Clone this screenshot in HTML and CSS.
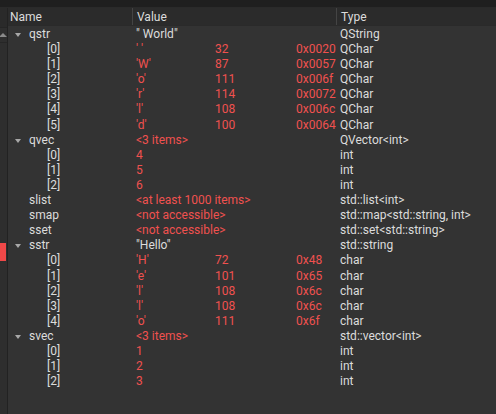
FILE: index.html
```html
<!DOCTYPE html>
<html lang="en">
<head>
  <meta charset="UTF-8">
  <title>Locals</title>
  <link rel="stylesheet" href="styles.css">
</head>
<body>
  <div class="topbar"></div>
  <div class="panel">
    <div class="gutter">
      <div class="gutter-head"></div>
      <div class="scroll-up"><span class="up-arrow"></span></div>
      <div class="breakpoint"></div>
    </div>
    <div class="view">
      <div class="header">
        <div class="col-name">Name</div>
        <div class="col-value">Value</div>
        <div class="col-type">Type</div>
      </div>

      <div class="row"><div class="col-name top"><span class="twisty"></span>qstr</div><div class="col-value plain">" World"</div><div class="col-type">QString</div></div>
      <div class="row"><div class="col-name child">[0]</div><div class="col-value"><span class="ch">' '</span><span class="dec">32</span><span class="hex">0x0020</span></div><div class="col-type">QChar</div></div>
      <div class="row"><div class="col-name child">[1]</div><div class="col-value"><span class="ch">'W'</span><span class="dec">87</span><span class="hex">0x0057</span></div><div class="col-type">QChar</div></div>
      <div class="row"><div class="col-name child">[2]</div><div class="col-value"><span class="ch">'o'</span><span class="dec">111</span><span class="hex">0x006f</span></div><div class="col-type">QChar</div></div>
      <div class="row"><div class="col-name child">[3]</div><div class="col-value"><span class="ch">'r'</span><span class="dec">114</span><span class="hex">0x0072</span></div><div class="col-type">QChar</div></div>
      <div class="row"><div class="col-name child">[4]</div><div class="col-value"><span class="ch">'l'</span><span class="dec">108</span><span class="hex">0x006c</span></div><div class="col-type">QChar</div></div>
      <div class="row"><div class="col-name child">[5]</div><div class="col-value"><span class="ch">'d'</span><span class="dec">100</span><span class="hex">0x0064</span></div><div class="col-type">QChar</div></div>

      <div class="row"><div class="col-name top"><span class="twisty"></span>qvec</div><div class="col-value">&lt;3 items&gt;</div><div class="col-type">QVector&lt;int&gt;</div></div>
      <div class="row"><div class="col-name child">[0]</div><div class="col-value">4</div><div class="col-type">int</div></div>
      <div class="row"><div class="col-name child">[1]</div><div class="col-value">5</div><div class="col-type">int</div></div>
      <div class="row"><div class="col-name child">[2]</div><div class="col-value">6</div><div class="col-type">int</div></div>

      <div class="row"><div class="col-name top">slist</div><div class="col-value">&lt;at least 1000 items&gt;</div><div class="col-type">std::list&lt;int&gt;</div></div>
      <div class="row"><div class="col-name top">smap</div><div class="col-value">&lt;not accessible&gt;</div><div class="col-type">std::map&lt;std::string, int&gt;</div></div>
      <div class="row"><div class="col-name top">sset</div><div class="col-value">&lt;not accessible&gt;</div><div class="col-type">std::set&lt;std::string&gt;</div></div>

      <div class="row"><div class="col-name top"><span class="twisty"></span>sstr</div><div class="col-value plain">"Hello"</div><div class="col-type">std::string</div></div>
      <div class="row"><div class="col-name child">[0]</div><div class="col-value"><span class="ch">'H'</span><span class="dec">72</span><span class="hex">0x48</span></div><div class="col-type">char</div></div>
      <div class="row"><div class="col-name child">[1]</div><div class="col-value"><span class="ch">'e'</span><span class="dec">101</span><span class="hex">0x65</span></div><div class="col-type">char</div></div>
      <div class="row"><div class="col-name child">[2]</div><div class="col-value"><span class="ch">'l'</span><span class="dec">108</span><span class="hex">0x6c</span></div><div class="col-type">char</div></div>
      <div class="row"><div class="col-name child">[3]</div><div class="col-value"><span class="ch">'l'</span><span class="dec">108</span><span class="hex">0x6c</span></div><div class="col-type">char</div></div>
      <div class="row"><div class="col-name child">[4]</div><div class="col-value"><span class="ch">'o'</span><span class="dec">111</span><span class="hex">0x6f</span></div><div class="col-type">char</div></div>

      <div class="row"><div class="col-name top"><span class="twisty"></span>svec</div><div class="col-value">&lt;3 items&gt;</div><div class="col-type">std::vector&lt;int&gt;</div></div>
      <div class="row"><div class="col-name child">[0]</div><div class="col-value">1</div><div class="col-type">int</div></div>
      <div class="row"><div class="col-name child">[1]</div><div class="col-value">2</div><div class="col-type">int</div></div>
      <div class="row"><div class="col-name child">[2]</div><div class="col-value">3</div><div class="col-type">int</div></div>
    </div>
  </div>
</body>
</html>
```

FILE: styles.css
```css
* {
  margin: 0;
  padding: 0;
  box-sizing: border-box;
}

html, body {
  width: 496px;
  height: 414px;
  overflow: hidden;
}

body {
  background: #333333;
  font-family: Roboto, "Noto Sans", sans-serif;
  font-size: 12px;
  color: #dcdcdc;
  display: flex;
  flex-direction: column;
}

.topbar {
  height: 8px;
  background: #1f1f1f;
  border-bottom: 1px solid #2a2a2a;
}

.panel {
  flex: 1;
  display: flex;
}

/* left gutter with the scroll arrow and the red marker */
.gutter {
  width: 8px;
  background: #2e2e2e;
  border-right: 1px solid #222222;
  position: relative;
}

.gutter-head {
  height: 20px;
  background: #2a2a2a;
  border-bottom: 1px solid #252525;
}

.scroll-up {
  height: 15px;
  border-bottom: 1px solid #262626;
  display: flex;
  align-items: center;
}

.up-arrow {
  width: 0;
  height: 0;
  margin-left: -1px;
  border-left: 4px solid transparent;
  border-right: 4px solid transparent;
  border-bottom: 4px solid #8a8a8a;
}

.breakpoint {
  position: absolute;
  left: 0;
  top: 235px;
  width: 6px;
  height: 18px;
  background: #f04848;
}

.view {
  flex: 1;
}

.header {
  display: flex;
  height: 18px;
  line-height: 18px;
  margin-bottom: 1px;
  background: #2b2b2b;
  border-bottom: 1px solid #2a2a2a;
}

.header .col-value,
.header .col-type {
  border-left: 1px solid #444444;
  color: #dcdcdc;
}

.row {
  display: flex;
  height: 15.1px;
  line-height: 15px;
  white-space: nowrap;
}

.col-name {
  width: 124px;
  padding-left: 2px;
}

.col-name.top {
  padding-left: 21px;
  position: relative;
}

.col-name.child {
  padding-left: 39px;
}

.twisty {
  position: absolute;
  left: 7px;
  top: 6px;
  width: 0;
  height: 0;
  border-left: 3.5px solid transparent;
  border-right: 3.5px solid transparent;
  border-top: 4px solid #a8a8a8;
}

.col-value {
  width: 204px;
  padding-left: 4px;
  color: #f0514f;
  display: flex;
}

.col-value.plain {
  color: #dcdcdc;
}

.ch {
  width: 79px;
}

.dec {
  width: 81px;
}

.col-type {
  flex: 1;
  padding-left: 4px;
  color: #dcdcdc;
}
```
